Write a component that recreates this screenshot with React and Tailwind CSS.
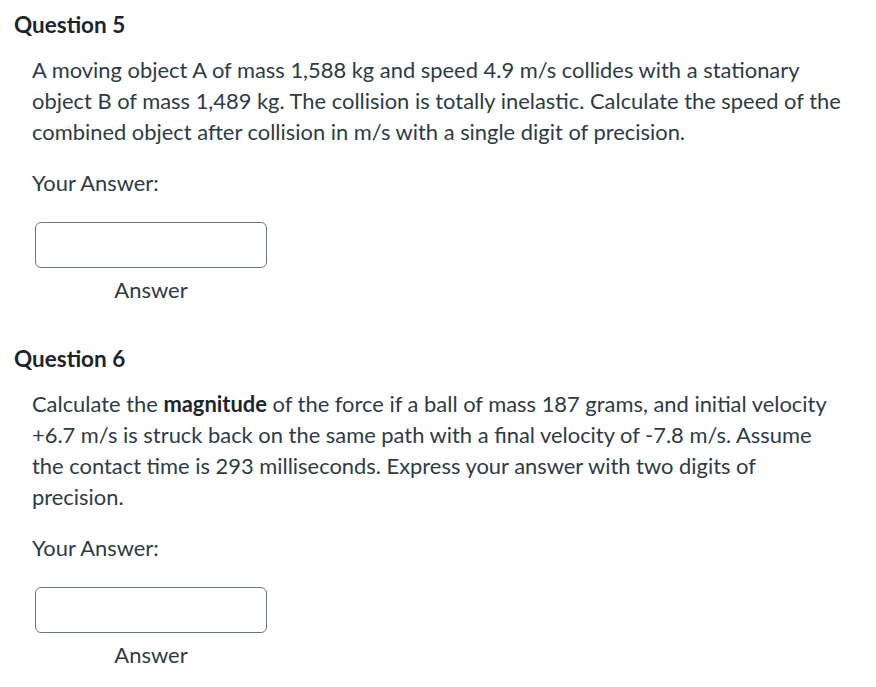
import React from 'react';

const AnswerBox = () => (
  <div className="flex flex-col items-center w-[232px] ml-[3px]">
    <input
      type="text"
      className="w-[232px] h-[46px] border border-[#6b7780] rounded-md bg-white focus:outline-none"
    />
    <span className="mt-[8px] text-[22px] leading-[28px] text-[#2d3b45]">Answer</span>
  </div>
);

const Question = ({ title, children }) => (
  <div>
    <h2 className="pl-[14px] pt-[10px] text-[22.5px] leading-[30px] font-bold text-[#1c2529]">{title}</h2>
    <div className="pl-[32px] pt-[14px]">
      <p className="w-[816px] text-[21.9px] leading-[31px] text-[#2d3b45]">{children}</p>
      <p className="mt-[20px] text-[21.9px] leading-[31px] text-[#2d3b45]">Your Answer:</p>
      <div className="mt-[24px]">
        <AnswerBox />
      </div>
    </div>
  </div>
);

export default function App() {
  return (
    <div className="w-[876px] h-[687px] bg-white overflow-hidden font-['Lato',sans-serif]">
      <Question title="Question 5">
        A moving object A of mass 1,588 kg and speed 4.9 m/s collides with a stationary object B of mass 1,489 kg. The collision is totally inelastic. Calculate the speed of the combined object after collision in m/s with a single digit of precision.
      </Question>
      <div className="mt-[30px]">
        <Question title="Question 6">
          Calculate the <strong className="font-bold text-[#1c2529]">magnitude</strong> of the force if a ball of mass 187 grams, and initial velocity +6.7 m/s is struck back on the same path with a final velocity of -7.8 m/s. Assume the contact time is 293 milliseconds. Express your answer with two digits of precision.
        </Question>
      </div>
    </div>
  );
}
